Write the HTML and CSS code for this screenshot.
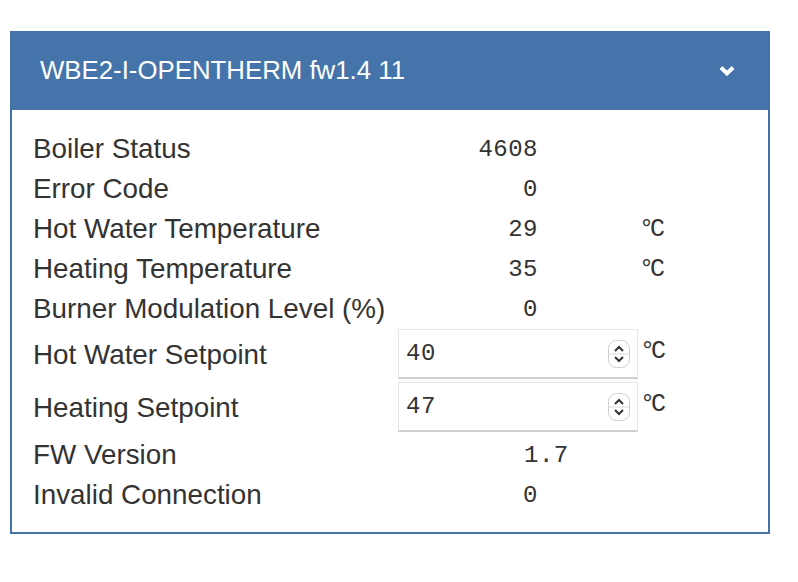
FILE: index.html
```html
<!DOCTYPE html>
<html lang="en">
<head>
    <meta charset="UTF-8">
    <meta name="viewport" content="width=device-width, initial-scale=1.0">
    <title>WBE2-I-OPENTHERM</title>
    <link rel="stylesheet" href="styles.css">
</head>
<body>

<div class="panel">
    <!-- Device header -->
    <div class="panel-header">
        <span class="title">WBE2-I-OPENTHERM fw1.4 11</span>
        <svg class="chevron" width="16" height="13" viewBox="0 0 16 13">
            <polyline points="2,3.5 8,9.5 14,3.5" fill="none" stroke="#fff" stroke-width="4"/>
        </svg>
    </div>

    <!-- Readings -->
    <div class="panel-body">
        <div class="row">
            <span class="label">Boiler Status</span>
            <span class="value">4608</span>
            <span class="unit"></span>
        </div>
        <div class="row">
            <span class="label">Error Code</span>
            <span class="value">0</span>
            <span class="unit"></span>
        </div>
        <div class="row">
            <span class="label">Hot Water Temperature</span>
            <span class="value">29</span>
            <span class="unit">°C</span>
        </div>
        <div class="row">
            <span class="label">Heating Temperature</span>
            <span class="value">35</span>
            <span class="unit">°C</span>
        </div>
        <div class="row">
            <span class="label">Burner Modulation Level (%)</span>
            <span class="value">0</span>
            <span class="unit"></span>
        </div>
        <div class="row input-row">
            <span class="label">Hot Water Setpoint</span>
            <div class="field">
                <span class="field-text">40</span>
                <svg class="spinner" width="22" height="28" viewBox="0 0 22 28">
                    <rect x="0.5" y="0.5" width="21" height="27" rx="8" fill="#fff" stroke="#cfcfcf"/>
                    <line x1="1" y1="14" x2="21" y2="14" stroke="#d8d8d8"/>
                    <polyline points="7,11 11,7 15,11" fill="none" stroke="#333" stroke-width="2"/>
                    <polyline points="7,17 11,21 15,17" fill="none" stroke="#333" stroke-width="2"/>
                </svg>
            </div>
            <span class="unit">°C</span>
        </div>
        <div class="row input-row">
            <span class="label">Heating Setpoint</span>
            <div class="field">
                <span class="field-text">47</span>
                <svg class="spinner" width="22" height="28" viewBox="0 0 22 28">
                    <rect x="0.5" y="0.5" width="21" height="27" rx="8" fill="#fff" stroke="#cfcfcf"/>
                    <line x1="1" y1="14" x2="21" y2="14" stroke="#d8d8d8"/>
                    <polyline points="7,11 11,7 15,11" fill="none" stroke="#333" stroke-width="2"/>
                    <polyline points="7,17 11,21 15,17" fill="none" stroke="#333" stroke-width="2"/>
                </svg>
            </div>
            <span class="unit">°C</span>
        </div>
        <div class="row">
            <span class="label">FW Version</span>
            <span class="value version">1.7</span>
            <span class="unit"></span>
        </div>
        <div class="row">
            <span class="label">Invalid Connection</span>
            <span class="value">0</span>
            <span class="unit"></span>
        </div>
    </div>
</div>

</body>
</html>
```

FILE: styles.css
```css
body {
    font-family: "Liberation Sans", Arial, sans-serif;
    background-color: #fff;
    margin: 0;
    padding: 31px 0 0 10px;
    color: #333;
}

.panel {
    width: 756px;
    border: 2px solid #4474aa;
    border-top: none;
}

.panel-header {
    height: 79px;
    background-color: #4474aa;
    margin: 0 -2px;
    padding: 0 35px 0 30px;
    display: flex;
    align-items: center;
    justify-content: space-between;
}

.title {
    color: #fff;
    font-size: 25.8px;
}

.chevron {
    display: block;
}

.panel-body {
    padding: 19px 0 17px 21px;
}

.row {
    display: grid;
    grid-template-columns: 365px 240px 1fr;
    align-items: center;
    height: 40px;
}

.label {
    font-size: 27.8px;
}

.value {
    font-family: "Liberation Mono", "Courier New", monospace;
    font-size: 24px;
    letter-spacing: 0.5px;
    text-align: right;
    padding-right: 100px;
}

.value.version {
    text-align: left;
    padding-left: 126px;
    padding-right: 0;
}

.unit {
    font-family: "Liberation Mono", "Courier New", monospace;
    font-size: 25px;
    letter-spacing: -4px;
    padding-left: 1px;
}

.input-row {
    height: 53px;
    align-items: start;
}

.input-row .label {
    align-self: center;
    margin-top: -2px;
}

.input-row .unit {
    padding-top: 8px;
    padding-left: 2px;
}

.field {
    height: 50px;
    box-sizing: border-box;
    border: 1px solid #e6e6e6;
    border-bottom: 2px solid #cfcfcf;
    background-color: #fff;
    display: flex;
    align-items: center;
    justify-content: space-between;
    padding: 0 7px 0 7px;
}

.field-text {
    font-family: "Liberation Mono", "Courier New", monospace;
    font-size: 24px;
    letter-spacing: 0.5px;
}

.spinner {
    display: block;
}
```
